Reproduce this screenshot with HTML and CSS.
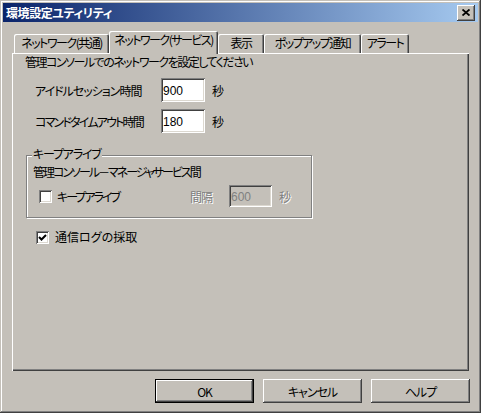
FILE: index.html
```html
<!DOCTYPE html>
<html lang="ja">
<head>
    <meta charset="UTF-8">
    <meta name="viewport" content="width=device-width, initial-scale=1.0">
    <title>環境設定ユティリティ</title>
    <link rel="stylesheet" href="styles.css">
</head>
<body>
    <div class="window">
        <div class="titlebar">
            <span class="title">環境設定ユティリティ</span>
            <span class="close-btn">
                <svg width="8" height="7" viewBox="0 0 8 7">
                    <path d="M0.5 0.5 L7.5 6.5 M7.5 0.5 L0.5 6.5" stroke="#000" stroke-width="1.8" fill="none"/>
                </svg>
            </span>
        </div>

        <div class="tabs">
            <div class="tab tab-common">ネットワーク(共通)</div>
            <div class="tab active tab-service">ネットワーク(サービス)</div>
            <div class="tab tab-view">表示</div>
            <div class="tab tab-popup">ポップアップ通知</div>
            <div class="tab tab-alert">アラート</div>
        </div>

        <div class="panel">
            <p class="intro">管理コンソールでのネットワークを設定してください</p>

            <div class="row">
                <label class="row-label" for="idle">アイドルセッション時間</label>
                <input class="field" id="idle" type="text" value="900">
                <span class="unit">秒</span>
            </div>
            <div class="row row-second">
                <label class="row-label label-tight" for="cmd">コマンドタイムアウト時間</label>
                <input class="field" id="cmd" type="text" value="180">
                <span class="unit">秒</span>
            </div>

            <div class="group">
                <div class="group-title">キープアライブ</div>
                <div class="group-desc">管理コンソール－マネージャサービス間</div>
                <div class="keepalive">
                    <span class="check"></span>
                    <span class="check-text keep-text">キープアライブ</span>
                    <span class="disabled interval">間隔</span>
                    <input class="field field-off" type="text" value="600" disabled>
                    <span class="unit disabled">秒</span>
                </div>
            </div>

            <div class="log-row">
                <span class="check">
                    <svg width="9" height="9" viewBox="0 0 9 9">
                        <path d="M1 4 L3.5 6.5 L8 2" stroke="#000" stroke-width="2" fill="none"/>
                    </svg>
                </span>
                <span class="check-text">通信ログの採取</span>
            </div>
        </div>

        <div class="buttons">
            <button type="button" class="btn default">OK</button>
            <button type="button" class="btn">キャンセル</button>
            <button type="button" class="btn">ヘルプ</button>
        </div>
    </div>
</body>
</html>
```

FILE: styles.css
```css
body {
    margin: 0;
    background: #c4c0b9;
    font-family: "Noto Sans CJK JP", "Noto Sans", sans-serif;
    font-size: 12px;
    font-feature-settings: "palt";
    letter-spacing: -1px;
    color: #000;
}

.window {
    width: 481px;
    height: 413px;
    box-sizing: border-box;
    padding: 3px;
    background: #c4c0b9;
    box-shadow: inset -1px -1px #404040, inset 1px 1px #c4c0b9, inset -2px -2px #808080, inset 2px 2px #fff;
}

.titlebar {
    height: 19px;
    display: flex;
    align-items: center;
    justify-content: space-between;
    padding: 0 3px 0 3px;
    background: linear-gradient(to right, #0a246a, #a6caf0);
}

.title {
    color: #fff;
    font-weight: bold;
    line-height: 16px;
    letter-spacing: -0.4px;
}

.close-btn {
    width: 18px;
    height: 16px;
    display: flex;
    align-items: center;
    justify-content: center;
    background: #c4c0b9;
    box-shadow: inset -1px -1px #404040, inset 1px 1px #fff, inset -2px -2px #808080;
}

/* tabs */

.tabs {
    display: flex;
    align-items: flex-end;
    height: 22px;
    margin: 9px 9px 0;
    padding-left: 2px;
}

.tab {
    height: 19px;
    box-sizing: border-box;
    padding-top: 1px;
    line-height: 16px;
    letter-spacing: -1.5px;
    text-align: center;
    white-space: nowrap;
    border-radius: 2px 2px 0 0;
    box-shadow: inset 1px 1px #fff, inset -1px 0 #404040, inset -2px 0 #808080;
}

.tab.active {
    height: 23px;
    margin-bottom: -1px;
    z-index: 1;
    background: #c4c0b9;
}

.tab-common { width: 95px; }
.tab-service { width: 109px; }
.tab-view { width: 46px; }
.tab-popup { width: 97px; }
.tab-alert { width: 48px; }

/* panel */

.panel {
    height: 318px;
    box-sizing: border-box;
    margin: 0 9px;
    padding: 1px 0 0 13px;
    box-shadow: inset 1px 1px #fff, inset -1px -1px #404040, inset -2px -2px #808080;
}

.intro {
    margin: 0;
    line-height: 16px;
    letter-spacing: -1.5px;
}

.row {
    display: flex;
    align-items: center;
    height: 24px;
    margin-top: 8px;
    padding-left: 10px;
}

.row-second {
    margin-top: 7px;
}

.row-label {
    width: 126px;
    white-space: nowrap;
}

.label-tight {
    letter-spacing: -1.8px;
}

.field {
    width: 44px;
    height: 24px;
    box-sizing: border-box;
    margin: 0;
    padding: 1px 0 0 2px;
    border: none;
    outline: none;
    background: #fff;
    font-family: "Liberation Sans", sans-serif;
    font-size: 12px;
    letter-spacing: 0;
    box-shadow: inset 1px 1px #808080, inset -1px -1px #fff, inset 2px 2px #404040, inset -2px -2px #dcd8d0;
}

.unit {
    margin-left: 7px;
}

/* keep alive group */

.group {
    width: 286px;
    height: 63px;
    box-sizing: border-box;
    margin: 22px 0 0 1px;
    padding-left: 6px;
    border: 1px solid #808080;
    box-shadow: 1px 1px #fff, inset 1px 1px #fff;
}

.group-title {
    width: fit-content;
    margin: -9px 0 0 -1px;
    padding: 0 1px;
    line-height: 14px;
    letter-spacing: -1.2px;
    background: #c4c0b9;
}

.group-desc {
    margin-top: 3px;
    line-height: 16px;
    letter-spacing: -2px;
    white-space: nowrap;
}

.keepalive {
    display: flex;
    align-items: center;
    height: 22px;
    margin-top: 5px;
    padding-left: 6px;
}

.check {
    width: 13px;
    height: 13px;
    box-sizing: border-box;
    display: inline-flex;
    align-items: center;
    justify-content: center;
    flex-shrink: 0;
    background: #fff;
    box-shadow: inset 1px 1px #808080, inset -1px -1px #fff, inset 2px 2px #404040, inset -2px -2px #dcd8d0;
}

.check-text {
    margin-left: 5px;
}

.keep-text {
    letter-spacing: -2px;
}

.disabled {
    color: #808080;
    text-shadow: 1px 1px #fff;
}

.interval {
    margin-left: auto;
    width: 39px;
}

.field-off {
    width: 43px;
    height: 22px;
    background: #c4c0b9;
    color: #808080;
}

.keepalive .unit {
    width: 32px;
    margin-left: 7px;
}

.log-row {
    display: flex;
    align-items: center;
    height: 16px;
    margin-top: 11px;
    padding-left: 11px;
    line-height: 16px;
}

.log-row .check-text {
    margin-left: 6px;
    letter-spacing: 0;
}

/* buttons */

.buttons {
    display: flex;
    justify-content: flex-end;
    gap: 9px;
    margin: 8px 8px 0 0;
}

.btn {
    width: 99px;
    height: 24px;
    padding: 0;
    border: none;
    background: #c4c0b9;
    font-family: "Noto Sans CJK JP", sans-serif;
    font-size: 12px;
    font-feature-settings: "palt";
    letter-spacing: -1px;
    color: #000;
    cursor: pointer;
    box-shadow: inset -1px -1px #404040, inset 1px 1px #fff, inset -2px -2px #808080;
}

.btn.default {
    border: 1px solid #000;
}
```
